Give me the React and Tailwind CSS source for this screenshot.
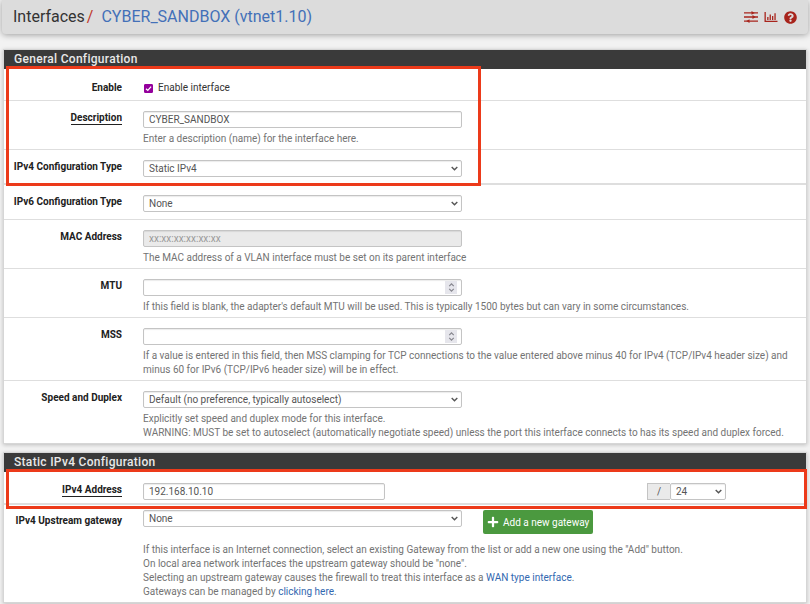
import { FaQuestionCircle, FaPlus } from "react-icons/fa";

const FIELD =
  "block h-[17px] w-full rounded-[2px] border border-[#c4c4c4] bg-white px-[5px] text-[10px] leading-[14px] text-[#555] shadow-[inset_0_1px_1px_rgba(0,0,0,0.08)] outline-none";

function Panel({ title, children }) {
  return (
    <section className="mx-[3px] border border-[#d6d6d6] bg-white shadow-[0_1px_4px_rgba(0,0,0,0.22)]">
      <h2 className="h-[19px] bg-[#3a3a3a] px-[10px] text-xs leading-[19px] font-medium tracking-wide text-[#e8e8e8]">
        {title}
      </h2>
      {children}
    </section>
  );
}

function Row({ label, htmlFor, required, children, className = "pt-[10px] pb-[3px]", labelClassName = "" }) {
  return (
    <div className={`flex gap-[21px] border-b border-[#dedede] pr-2 last:border-b-0 ${className}`}>
      <div className={`w-[118px] shrink-0 text-right text-[10px] leading-[14px] font-bold whitespace-nowrap text-[#212121] ${labelClassName}`}>
        <label htmlFor={htmlFor} className={required ? "inline-block border-b border-[#212121] leading-[12px]" : ""}>
          {label}
        </label>
      </div>
      <div className="min-w-0 flex-1">{children}</div>
    </div>
  );
}

function Help({ children }) {
  return <p className="mt-1 text-[10px] leading-[14px] text-[#737373]">{children}</p>;
}

function Select({ id, children, label }) {
  return (
    <div className="relative">
      <select id={id} aria-label={label} className={`${FIELD} appearance-none`}>
        {children}
      </select>
      <svg className="pointer-events-none absolute top-[6px] right-1 h-[5px] w-[7px]" viewBox="0 0 7 5" fill="none" stroke="#555" strokeWidth="1.4">
        <path d="M0.7 1 L3.5 3.8 L6.3 1" />
      </svg>
    </div>
  );
}

function NumberField({ id }) {
  return (
    <div className="relative w-[319px]">
      <input id={id} type="number" className={`${FIELD} [appearance:textfield]`} />
      <span className="pointer-events-none absolute top-[2px] right-[5px] flex h-[13px] w-[12px] items-center justify-center bg-[#e6e6ec]">
        <svg className="h-[9px] w-[7px]" viewBox="0 0 7 10" fill="none" stroke="#85858d" strokeWidth="1.3">
          <path d="M1 3.5 L3.5 1 L6 3.5 M1 6.5 L3.5 9 L6 6.5" />
        </svg>
      </span>
    </div>
  );
}

function SlidersIcon() {
  return (
    <svg className="h-3 w-[14px]" viewBox="0 0 14 12" fill="#a8241c">
      <path d="M0 1.2h14v1.4H0zM0 5.3h14v1.4H0zM0 9.4h14v1.4H0z" />
      <path d="M7.5 0l3.2 1.9-3.2 1.9zM8.5 4l3.2 2-3.2 2zM5.5 8.2v3.8L2.3 10.1z" />
    </svg>
  );
}

function ChartIcon() {
  return (
    <svg className="h-3 w-[14px]" viewBox="0 0 14 12" fill="#a8241c">
      <path d="M0.5 1h1.3v8.8h11.7V11H0.5zM3.2 6h1.3v3H3.2zM5.6 3.5h1.3V9H5.6zM8 5h1.3v4H8zM10.4 2.3h1.3V9h-1.3z" />
    </svg>
  );
}

export default function App() {
  return (
    <div className="min-h-screen bg-[#f2f2f2] font-[Roboto,'Liberation_Sans',sans-serif]">
      <header className="mx-[2px] flex h-[34px] items-center justify-between rounded-b-[4px] bg-[#dcdcdc] pr-[11px] pl-[11px] shadow-[0_1px_6px_rgba(0,0,0,0.35)]">
        <h1 className="flex items-center text-base leading-5 text-[#333]">
          <span>Interfaces</span>
          <span className="ml-[2px] text-[#c0392b]">/</span>
          <a href="#interface" className="ml-2 text-[#4370b8]">CYBER_SANDBOX (vtnet1.10)</a>
        </h1>
        <nav className="flex items-center gap-[6px] text-[#a8241c]">
          <a href="#settings" aria-label="Settings"><SlidersIcon /></a>
          <a href="#status" aria-label="Status"><ChartIcon /></a>
          <a href="#help" aria-label="Help"><FaQuestionCircle className="size-[13px]" /></a>
        </nav>
      </header>

      <main className="flex flex-col gap-2 pt-[15px]">
        <Panel title="General Configuration">
          <div className="relative border-b border-[#dedede]">
            <Row label="Enable" htmlFor="enable" className="pt-3 pb-[5px]">
              <div className="flex h-[14px] items-center gap-[5px]">
                <span className="relative ml-px size-[9px]">
                  <input id="enable" type="checkbox" defaultChecked className="peer block size-[9px] appearance-none rounded-[1px] border border-[#999] bg-white checked:border-[#94009c] checked:bg-[#94009c]" />
                  <svg className="pointer-events-none absolute inset-0 hidden size-[9px] peer-checked:block" viewBox="0 0 9 9" fill="none" stroke="#fff" strokeWidth="1.3">
                    <path d="M2 4.7 L3.8 6.4 L7.1 2.6" />
                  </svg>
                </span>
                <label htmlFor="enable" className="text-[10px] leading-[14px] text-[#333]">Enable interface</label>
              </div>
            </Row>
            <Row label="Description" htmlFor="descr" required>
              <div className="w-[319px]">
                <input id="descr" type="text" defaultValue="CYBER_SANDBOX" className={FIELD} />
              </div>
              <Help>Enter a description (name) for the interface here.</Help>
            </Row>
            <Row label="IPv4 Configuration Type" htmlFor="type4" className="pt-[10px] pb-[6px]">
              <div className="w-[319px]">
                <Select id="type4"><option>Static IPv4</option></Select>
              </div>
            </Row>
            <div className="pointer-events-none absolute top-[-3px] bottom-[-2px] left-[2px] w-[475px] border-3 border-[#ec3a1a]" />
          </div>
          <Row label="IPv6 Configuration Type" htmlFor="type6" className="pt-[10px] pb-[7px]">
            <div className="w-[319px]">
              <Select id="type6"><option>None</option></Select>
            </div>
          </Row>
          <Row label="MAC Address" htmlFor="mac">
            <div className="w-[319px]">
              <input id="mac" type="text" disabled placeholder="xx:xx:xx:xx:xx:xx" className={`${FIELD} bg-[#eaeaea]! placeholder:text-[#999]`} />
            </div>
            <Help>The MAC address of a VLAN interface must be set on its parent interface</Help>
          </Row>
          <Row label="MTU" htmlFor="mtu">
            <NumberField id="mtu" />
            <Help>If this field is blank, the adapter's default MTU will be used. This is typically 1500 bytes but can vary in some circumstances.</Help>
          </Row>
          <Row label="MSS" htmlFor="mss">
            <NumberField id="mss" />
            <Help>
              If a value is entered in this field, then MSS clamping for TCP connections to the value entered above minus 40 for IPv4 (TCP/IPv4 header size) and minus 60 for IPv6 (TCP/IPv6 header size) will be in effect.
            </Help>
          </Row>
          <Row label="Speed and Duplex" htmlFor="media">
            <div className="w-[319px]">
              <Select id="media"><option>Default (no preference, typically autoselect)</option></Select>
            </div>
            <Help>
              Explicitly set speed and duplex mode for this interface.
              <br />
              WARNING: MUST be set to autoselect (automatically negotiate speed) unless the port this interface connects to has its speed and duplex forced.
            </Help>
          </Row>
        </Panel>

        <Panel title="Static IPv4 Configuration">
          <div className="relative border-b border-[#dedede]">
            <Row label="IPv4 Address" htmlFor="ipaddr" required className="pt-[11px] pb-[3px]">
              <div className="flex justify-between pr-[72px]">
                <div className="w-[242px]">
                  <input id="ipaddr" type="text" defaultValue="192.168.10.10" className={FIELD} />
                </div>
                <div className="flex">
                  <span className="h-[17px] w-[23px] border border-r-0 border-[#c4c4c4] bg-[#eaeaea] text-center text-[10px] leading-[15px] text-[#555]">/</span>
                  <div className="w-[56px]">
                    <Select id="subnet" label="Subnet mask"><option>24</option></Select>
                  </div>
                </div>
              </div>
            </Row>
            <div className="pointer-events-none absolute top-[-3px] right-[-1px] bottom-[-5px] left-[2px] border-3 border-[#ec3a1a]" />
          </div>
          <Row label="IPv4 Upstream gateway" htmlFor="gateway" className="pt-[5px] pb-[3px]" labelClassName="pt-1">
            <div className="flex items-start gap-[21px]">
              <div className="w-[319px]">
                <Select id="gateway"><option>None</option></Select>
              </div>
              <button type="button" className="flex h-6 items-center gap-1 rounded-[2px] bg-[#4b993f] px-1 text-[10px] text-white">
                <FaPlus className="size-3" />
                Add a new gateway
              </button>
            </div>
            <div className="mt-[9px] text-[10px] leading-[14px] text-[#737373]">
              <p>If this interface is an Internet connection, select an existing Gateway from the list or add a new one using the "Add" button.</p>
              <p>On local area network interfaces the upstream gateway should be "none".</p>
              <p>Selecting an upstream gateway causes the firewall to treat this interface as a <a href="#wan" className="text-[#3268b0]">WAN type interface</a>.</p>
              <p>Gateways can be managed by <a href="#gateways" className="text-[#3268b0]">clicking here</a>.</p>
            </div>
          </Row>
        </Panel>
      </main>
    </div>
  );
}
